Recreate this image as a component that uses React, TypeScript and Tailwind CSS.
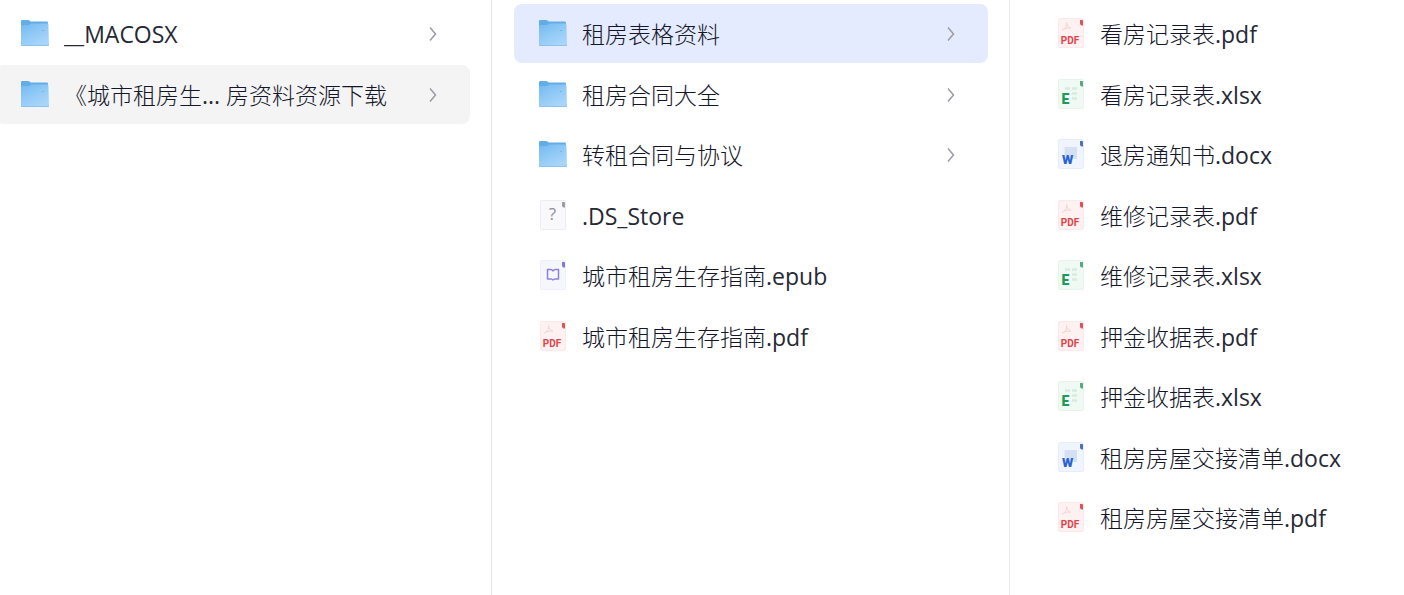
import { ReactNode } from "react";

type Kind = "folder" | "pdf" | "excel" | "word" | "epub" | "unknown";

interface Item {
  name: string;
  kind: Kind;
  state?: "open" | "selected";
}

const rootItems: Item[] = [
  { name: "__MACOSX", kind: "folder" },
  { name: "《城市租房生... 房资料资源下载", kind: "folder", state: "open" },
];

const guideItems: Item[] = [
  { name: "租房表格资料", kind: "folder", state: "selected" },
  { name: "租房合同大全", kind: "folder" },
  { name: "转租合同与协议", kind: "folder" },
  { name: ".DS_Store", kind: "unknown" },
  { name: "城市租房生存指南.epub", kind: "epub" },
  { name: "城市租房生存指南.pdf", kind: "pdf" },
];

const formItems: Item[] = [
  { name: "看房记录表.pdf", kind: "pdf" },
  { name: "看房记录表.xlsx", kind: "excel" },
  { name: "退房通知书.docx", kind: "word" },
  { name: "维修记录表.pdf", kind: "pdf" },
  { name: "维修记录表.xlsx", kind: "excel" },
  { name: "押金收据表.pdf", kind: "pdf" },
  { name: "押金收据表.xlsx", kind: "excel" },
  { name: "租房房屋交接清单.docx", kind: "word" },
  { name: "租房房屋交接清单.pdf", kind: "pdf" },
];

function FolderIcon() {
  return (
    <svg viewBox="0 0 28 26" className="h-[26px] w-7" aria-hidden="true">
      <defs>
        <linearGradient id="folderFront" x1="0" y1="0" x2="0.6" y2="1">
          <stop offset="0" stopColor="#72b9f0" />
          <stop offset="0.5" stopColor="#8fc9f6" />
          <stop offset="1" stopColor="#a9d5fa" />
        </linearGradient>
      </defs>
      <path d="M0 1.2Q0 0 1.2 0H7.2Q8 0 8.5.6L9.6 1.6H25.8Q27 1.6 27 2.8V12H0Z" fill="#62ade8" />
      <path d="M0 5.6Q0 5 .8 5H8L10 3.4H26.2Q27.4 3.4 27.4 4.6L28 24.8Q28 26 26.8 26H1.2Q0 26 0 24.8Z" fill="url(#folderFront)" />
      <path d="M0 24.2V24.8Q0 26 1.2 26H26.8Q28 26 28 24.8V24.2Q28 25.3 26.8 25.3H1.2Q0 25.3 0 24.2Z" fill="#83bdec" />
      <path d="M21 10.5h1.8" stroke="#6fb0e8" strokeWidth="1" />
    </svg>
  );
}

// Blank sheet shared by every file type, only the tint changes
function Sheet({ paper, edge, fold, children }: { paper: string; edge: string; fold: string; children: ReactNode }) {
  return (
    <svg viewBox="0 0 26 30" className="h-[30px] w-[26px]" aria-hidden="true">
      <rect x="0.5" y="0.5" width="25" height="29" rx="1.5" fill={paper} stroke={edge} />
      <path d="M22 2H24.2Q25 2 25 2.8V7.5H23.5Q22 7 22 5.5Z" fill={fold} />
      {children}
    </svg>
  );
}

function FileIcon({ kind }: { kind: Kind }) {
  if (kind === "folder") return <FolderIcon />;

  if (kind === "pdf") {
    return (
      <Sheet paper="#fdf1f1" edge="#fbe8e8" fold="#d9555a">
        <path d="M8.5 4.5C9.5 8 6.5 11 4.5 12C7 10 11 9.5 13 10.5C10.5 9.5 8.8 7.5 8.5 4.5Z" fill="none" stroke="#f8d3d4" strokeWidth="1" />
        <text x="12" y="26" textAnchor="middle" fill="#e0444a" fontSize="10" fontWeight="700" fontFamily="Roboto, sans-serif">PDF</text>
      </Sheet>
    );
  }

  if (kind === "excel") {
    return (
      <Sheet paper="#f0f9f4" edge="#e6f4ec" fold="#5aa583">
        <path d="M7 9.5h5M14 9.5h5M14 14.5h5M14 19.5h5" stroke="#d3ecdf" strokeWidth="2.5" />
        <text x="3.5" y="25" fill="#1f9a5b" fontSize="14" fontWeight="900" fontFamily="Roboto, sans-serif">E</text>
      </Sheet>
    );
  }

  if (kind === "word") {
    return (
      <Sheet paper="#f0f5fd" edge="#e5edf9" fold="#5570ae">
        <rect x="6.5" y="8" width="12.5" height="12" fill="#d5e0f4" />
        <text x="4" y="25" fill="#2a63d0" fontSize="13" fontWeight="900" fontFamily="Roboto, sans-serif">W</text>
      </Sheet>
    );
  }

  if (kind === "epub") {
    return (
      <Sheet paper="#f6f6fd" edge="#efeffa" fold="#7f79cf">
        <path d="M7.5 9.5H10.5Q12.2 9.5 13 11Q13.8 9.5 15.5 9.5H18.5V19H14.5L13 20L11.5 19H7.5Z" fill="none" stroke="#8a82dc" strokeWidth="1.5" strokeLinejoin="round" />
      </Sheet>
    );
  }

  return (
    <Sheet paper="#f9f9fc" edge="#ecedf2" fold="#9b9ca8">
      <text x="12.5" y="20" textAnchor="middle" fill="#8b8d9b" fontSize="17" fontFamily="Open Sans, sans-serif">?</text>
    </Sheet>
  );
}

function Chevron() {
  return (
    <svg viewBox="0 0 8 14" className="h-3.5 w-2 shrink-0" fill="none" aria-hidden="true">
      <path d="M1 0.5L6.5 7L1 13.5" stroke="#9a9ba3" strokeWidth="1.5" />
    </svg>
  );
}

// Chinese runs use the light cut, Latin ones stay regular
function FileName({ name }: { name: string }) {
  const parts = name.match(/[\x00-\x7f]+|[^\x00-\x7f]+/g) ?? [];
  return (
    <span className="min-w-0 flex-1 truncate text-left text-[23px] leading-8">
      {parts.map((part, i) => (
        <span key={i} className={part.charCodeAt(0) < 128 ? "font-normal text-[#262835]" : "font-light text-[#14162a]"}>
          {part}
        </span>
      ))}
    </span>
  );
}

function Row({ item }: { item: Item }) {
  const background =
    item.state === "selected" ? "bg-[#e5ebfe]" : item.state === "open" ? "bg-[#f4f4f5]" : "bg-transparent";
  return (
    <li className="odd:h-[61px] even:h-[60px]">
      <button type="button" className={`flex h-[59px] w-full items-center gap-[15px] rounded-lg pr-[33px] pl-[25px] ${background}`}>
        <span className="flex w-7 shrink-0 justify-center pb-px">
          <FileIcon kind={item.kind} />
        </span>
        <FileName name={item.name} />
        {item.kind === "folder" && <Chevron />}
      </button>
    </li>
  );
}

function Column({ label, items, className }: { label: string; items: Item[]; className: string }) {
  return (
    <section aria-label={label} className={`min-w-0 overflow-hidden border-[#e8e8ea] pt-1 ${className}`}>
      <ul>
        {items.map((item) => (
          <Row key={item.name} item={item} />
        ))}
      </ul>
    </section>
  );
}

export default function App() {
  return (
    <main className="grid min-h-screen grid-cols-[492fr_518fr_394fr] overflow-hidden bg-white font-['Open_Sans','Noto_Sans_CJK_SC',sans-serif]">
      <Column label="下载" items={rootItems} className="-ml-1 border-r pr-[21px]" />
      <Column label="城市租房" items={guideItems} className="border-r pr-[21px] pl-[22px]" />
      <Column label="租房表格资料" items={formItems} className="pl-[22px]" />
    </main>
  );
}
